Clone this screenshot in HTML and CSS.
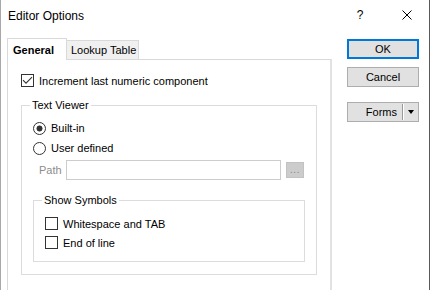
FILE: index.html
```html
<!DOCTYPE html>
<html lang="en">
<head>
  <meta charset="UTF-8">
  <title>Editor Options</title>
  <link rel="stylesheet" href="styles.css">
</head>
<body>
  <div class="window">
    <div class="titlebar">
      <span class="title">Editor Options</span>
      <span class="caption-btn help">?</span>
      <span class="caption-btn close">
        <svg width="10" height="10" viewBox="0 0 10 10"><path d="M0.5 0.5 L9.5 9.5 M9.5 0.5 L0.5 9.5" stroke="#000" stroke-width="1" fill="none"/></svg>
      </span>
    </div>

    <div class="content">
      <div class="tab-area">
        <div class="tabs">
          <div class="tab active">General</div>
          <div class="tab">Lookup Table</div>
        </div>
        <div class="panel">
          <div class="check-row">
            <span class="box">
              <svg width="11" height="11" viewBox="0 0 11 11"><path d="M1 5.2 L4 8.2 L10 2.2" stroke="#333" stroke-width="1.1" fill="none"/></svg>
            </span>
            Increment last numeric component
          </div>

          <div class="group viewer">
            <div class="group-title">Text Viewer</div>
            <div class="radio-row first"><span class="radio on"></span>Built-in</div>
            <div class="radio-row"><span class="radio"></span>User defined</div>
            <div class="path-row">
              <span class="path-label">Path</span>
              <span class="path-input"></span>
              <span class="browse">...</span>
            </div>

            <div class="group symbols">
              <div class="group-title">Show Symbols</div>
              <div class="sym-row first"><span class="box"></span>Whitespace and TAB</div>
              <div class="sym-row"><span class="box"></span>End of line</div>
            </div>
          </div>
        </div>
      </div>

      <div class="buttons">
        <div class="btn default">OK</div>
        <div class="btn cancel">Cancel</div>
        <div class="btn split">
          <span class="split-text">Forms</span>
          <span class="split-sep"></span>
          <span class="split-arrow"><span class="caret"></span></span>
        </div>
      </div>
    </div>
  </div>
</body>
</html>
```

FILE: styles.css
```css
* {
  box-sizing: border-box;
}
html, body {
  margin: 0;
  padding: 0;
  background: #fff;
}
body {
  font-family: "Liberation Sans", Arial, sans-serif;
  font-size: 11px;
  color: #000;
}
.window {
  width: 430px;
  height: 290px;
  overflow: hidden;
  background: #fff;
  border-left: 1px solid #a8a8a8;
  border-right: 1px solid #5a5a5a;
}

/* title bar */
.titlebar {
  height: 32px;
  display: flex;
  align-items: center;
  padding-left: 7px;
}
.title {
  flex: 1;
  font-size: 12px;
  padding-bottom: 1px;
}
.caption-btn {
  width: 46px;
  height: 32px;
  display: flex;
  align-items: center;
  justify-content: center;
}
.help {
  font-size: 12px;
  padding-bottom: 2px;
}
.close svg {
  display: block;
  margin-left: 1px;
  margin-bottom: 2px;
}

/* main area */
.content {
  display: flex;
  padding: 6px 0 0 6px;
}
.tab-area {
  width: 325px;
}
.tabs {
  display: flex;
  align-items: flex-end;
}
.tab {
  height: 19px;
  border: 1px solid #d9d9d9;
  border-bottom: none;
  background: #f0f0f0;
  display: flex;
  align-items: center;
  padding: 0 0 1px 4px;
  width: 73px;
  margin-left: -1px;
}
.tab.active {
  position: relative;
  z-index: 1;
  height: 22px;
  width: 60px;
  margin-left: 0;
  margin-bottom: -1px;
  background: #fff;
  font-weight: bold;
  padding: 0 0 0 5px;
}
.panel {
  height: 240px;
  border: 1px solid #d9d9d9;
  border-right: 2px solid #e2e2e2;
  padding: 14px 0 0 13px;
}

/* check boxes and radios */
.check-row, .sym-row, .radio-row {
  display: flex;
  align-items: center;
}
.check-row {
  height: 13px;
}
.box {
  width: 13px;
  height: 13px;
  border: 1px solid #333;
  background: #fff;
  margin-right: 5px;
  flex-shrink: 0;
}
.box svg {
  display: block;
}
.radio {
  width: 13px;
  height: 13px;
  border: 1px solid #333;
  border-radius: 50%;
  margin-right: 5px;
  flex-shrink: 0;
}
.radio.on {
  background: radial-gradient(circle, #333 2.7px, #fff 3.3px);
}

/* group boxes */
.group {
  border: 1px solid #dcdcdc;
}
.group-title {
  width: fit-content;
  line-height: 16px;
  height: 16px;
  margin: -9px 0 0 -3px;
  padding: 0 2px;
  background: #fff;
}
.viewer {
  width: 296px;
  margin-top: 18px;
  padding: 0 0 12px 11px;
}
.radio-row {
  height: 20px;
}
.radio-row.first {
  margin-top: 5px;
}
.path-row {
  display: flex;
  align-items: center;
  height: 20px;
  margin-top: 2px;
}
.path-label {
  width: 27px;
  margin-left: 6px;
  color: #8c8c8c;
}
.path-input {
  width: 215px;
  height: 20px;
  border: 1px solid #cccccc;
  background: #fff;
}
.browse {
  width: 18px;
  height: 16px;
  margin-left: 5px;
  background: #cccccc;
  border: 1px solid #c2c2c2;
  color: #8a8a8a;
  font-size: 10px;
  line-height: 14px;
  text-align: center;
  letter-spacing: 0.5px;
}
.symbols {
  width: 272px;
  margin-top: 20px;
  padding: 0 0 9px 11px;
}
.sym-row {
  height: 19px;
}
.sym-row.first {
  margin-top: 6px;
}

/* right hand buttons */
.buttons {
  margin-left: 15px;
  padding-top: 1px;
}
.btn {
  width: 72px;
  height: 20px;
  background: #e1e1e1;
  border: 1px solid #adadad;
  display: flex;
  align-items: center;
  justify-content: center;
}
.btn.default {
  border: 2px solid #0078d7;
}
.btn.cancel {
  margin-top: 8px;
}
.btn.split {
  margin-top: 15px;
  justify-content: flex-end;
}
.split-text {
  padding-right: 5px;
}
.split-sep {
  width: 2px;
  height: 16px;
  border-left: 1px solid #9a9a9a;
  background: #fff;
}
.split-arrow {
  width: 14px;
  height: 18px;
  display: flex;
  align-items: center;
  justify-content: center;
}
.caret {
  width: 0;
  height: 0;
  border-left: 3.5px solid transparent;
  border-right: 3.5px solid transparent;
  border-top: 4px solid #000;
}
```
